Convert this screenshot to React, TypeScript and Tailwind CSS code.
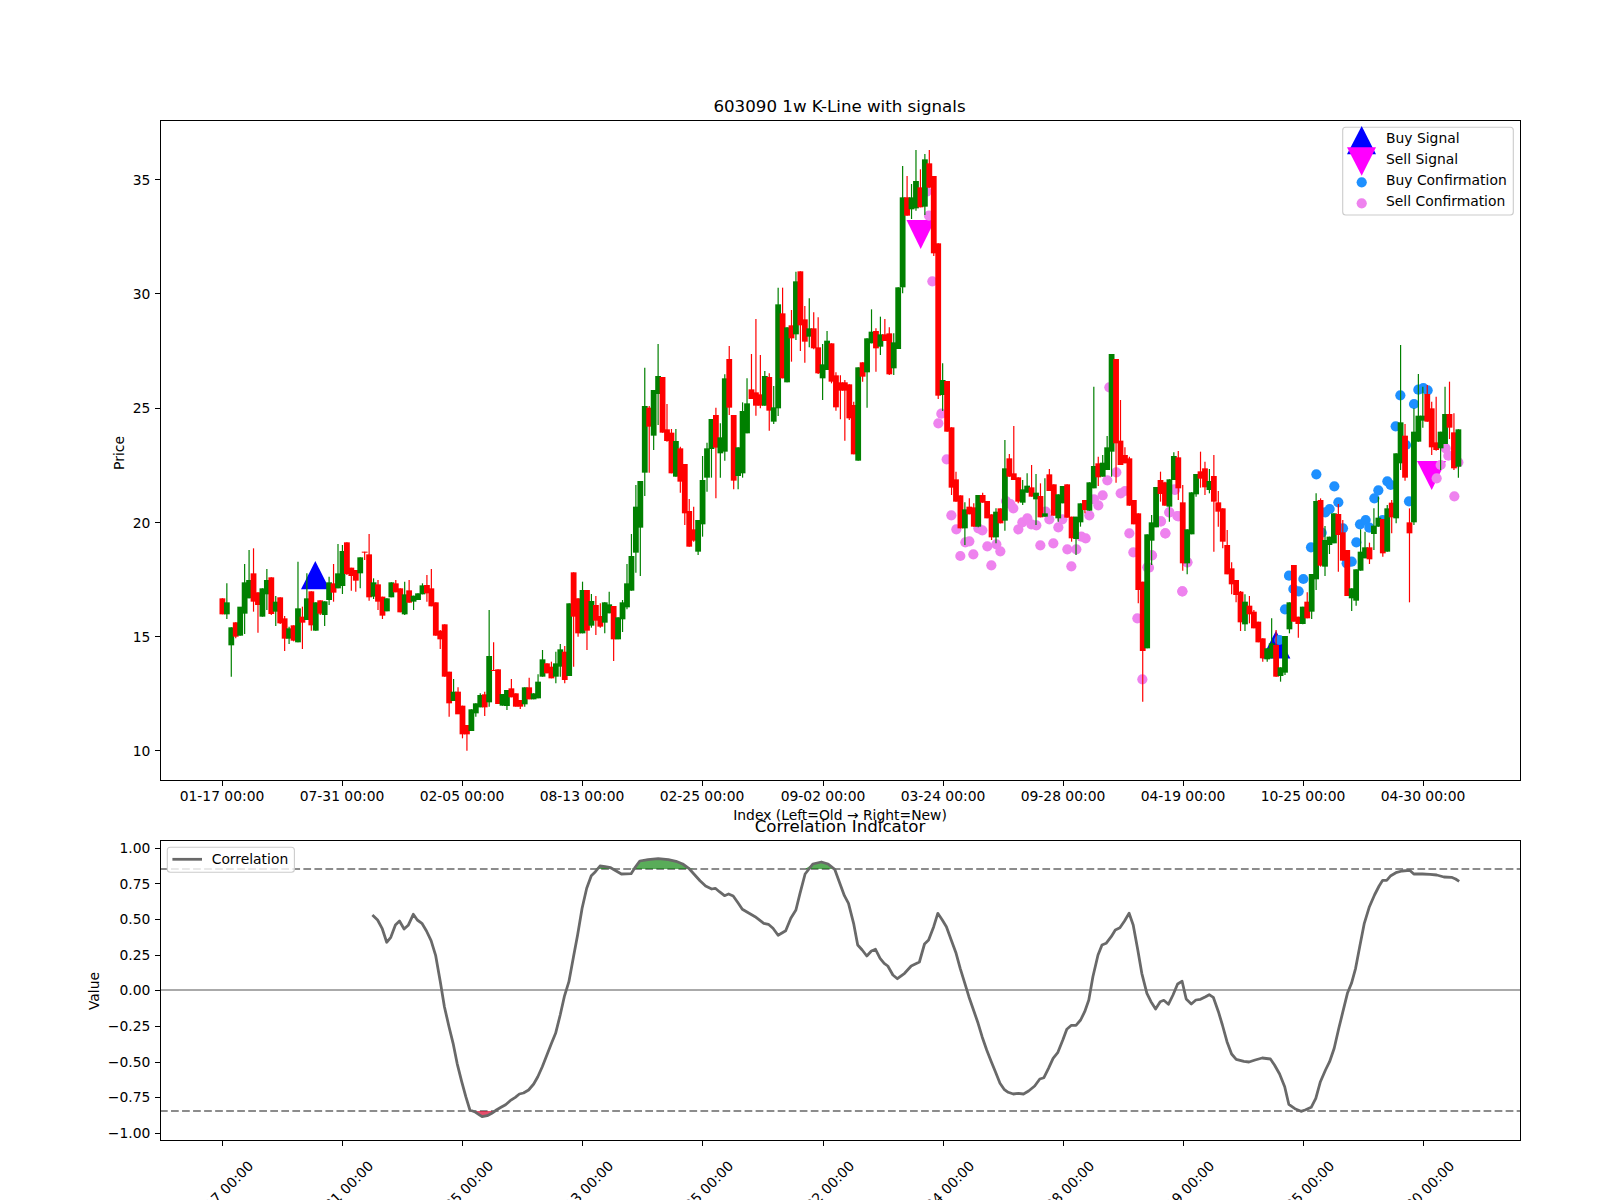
import React from "react";

type Row = [string, number, number, number, number];
type Candle = { c: string; wt: number; bt: number; bb: number; wb: number };

const seg = (y0: number, rows: Row[]): Candle[] =>
  rows.map(([c, wt, bt, bb, wb]) => ({
    c,
    wt: y0 + wt / 3,
    bt: y0 + bt / 3,
    bb: y0 + bb / 3,
    wb: y0 + wb / 3,
  }));

const candles: Candle[] = [
  ...seg(500, [
    ["r", 295, 295, 343, 343], ["g", 250, 307, 343, 357], ["g", 382, 382, 436, 530], ["r", 367, 367, 410, 415],
    ["g", 360, 320, 407, 407], ["g", 192, 247, 341, 402], ["g", 150, 240, 295, 295], ["r", 145, 220, 305, 335],
    ["r", 277, 277, 315, 398], ["g", 265, 265, 350, 350], ["g", 207, 240, 283, 330], ["r", 232, 232, 342, 345],
    ["g", 288, 305, 335, 378], ["r", 292, 292, 370, 372], ["r", 348, 355, 416, 453], ["g", 380, 385, 416, 432],
    ["r", 376, 376, 422, 424], ["g", 185, 325, 427, 427], ["r", 320, 350, 368, 447], ["g", 220, 295, 360, 360],
    ["r", 274, 274, 376, 392], ["g", 307, 307, 392, 392], ["r", 301, 301, 341, 345], ["g", 304, 304, 345, 378],
    ["g", 230, 247, 300, 315], ["r", 192, 250, 278, 305], ["g", 132, 220, 265, 265], ["g", 135, 153, 258, 282],
    ["r", 127, 127, 222, 225], ["r", 203, 203, 228, 272], ["r", 210, 210, 242, 275], ["g", 172, 172, 220, 265],
    ["r", 155, 155, 155, 180], ["r", 102, 163, 292, 302], ["g", 235, 247, 290, 297], ["r", 240, 253, 305, 330],
    ["r", 290, 290, 347, 357], ["g", 295, 295, 334, 334], ["g", 247, 247, 292, 292], ["r", 240, 250, 277, 277],
    ["r", 265, 265, 337, 337], ["g", 245, 283, 343, 345], ["r", 240, 271, 308, 308], ["g", 287, 287, 305, 330],
    ["g", 280, 280, 300, 300], ["g", 250, 256, 283, 283], ["r", 225, 255, 280, 305], ["r", 207, 265, 319, 319],
    ["r", 307, 307, 407, 407], ["r", 390, 392, 418, 447], ["r", 373, 373, 530, 530], ["r", 515, 515, 610, 650],
    ["g", 537, 575, 603, 603], ["r", 562, 575, 643, 640], ["r", 617, 617, 703, 715], ["r", 675, 675, 703, 752],
    ["g", 628, 628, 693, 693], ["g", 610, 610, 640, 650], ["g", 580, 585, 622, 622], ["r", 575, 583, 622, 648],
    ["g", 330, 468, 607, 620], ["r", 427, 510, 510, 510], ["r", 508, 508, 612, 612], ["g", 582, 582, 617, 617],
    ["g", 570, 570, 618, 630], ["r", 537, 565, 592, 592], ["r", 580, 580, 620, 620], ["r", 600, 600, 620, 627],
    ["g", 562, 562, 613, 620], ["r", 533, 562, 598, 598], ["g", 580, 580, 598, 598], ["g", 523, 545, 595, 595],
  ]),
  ...seg(470, [
    ["g", 540, 568, 620, 620], ["r", 580, 580, 610, 610], ["r", 575, 590, 625, 625], ["g", 545, 580, 620, 640],
    ["g", 522, 538, 590, 620], ["r", 528, 545, 630, 640], ["g", 400, 400, 618, 618], ["r", 307, 307, 440, 590],
    ["r", 385, 385, 490, 500], ["g", 335, 360, 490, 490], ["r", 360, 360, 482, 540], ["g", 372, 393, 467, 473],
    ["r", 378, 405, 452, 495], ["r", 400, 438, 470, 473], ["g", 397, 397, 458, 490], ["g", 365, 403, 430, 430],
    ["r", 408, 408, 508, 573], ["g", 442, 442, 508, 508], ["g", 390, 397, 448, 486], ["g", 282, 340, 412, 418],
    ["g", 192, 258, 362, 362], ["g", 45, 110, 248, 308], ["g", 33, 33, 173, 318],
  ]),
  ...seg(250, [
    ["g", 353, 468, 668, 738], ["r", 468, 473, 530, 668], ["g", 420, 420, 557, 600], ["g", 282, 378, 432, 525],
    ["r", 381, 381, 548, 548], ["r", 462, 538, 573, 575], ["r", 537, 548, 670, 670], ["g", 537, 573, 680, 680],
    ["r", 590, 595, 695, 728], ["r", 642, 642, 790, 825], ["r", 747, 783, 890, 890], ["r", 770, 838, 872, 875],
    ["g", 810, 810, 905, 915], ["g", 618, 690, 823, 860], ["g", 578, 595, 683, 725], ["g", 507, 507, 597, 683],
    ["r", 473, 495, 593, 745], ["g", 520, 562, 610, 683], ["g", 373, 385, 605, 632], ["r", 288, 327, 473, 495],
    ["r", 495, 495, 692, 718], ["g", 592, 592, 678, 718], ["g", 457, 483, 670, 683], ["g", 385, 460, 550, 550],
    ["r", 312, 418, 447, 447], ["r", 207, 427, 467, 497], ["r", 315, 433, 467, 475], ["g", 363, 378, 467, 467],
    ["r", 370, 381, 482, 542], ["g", 408, 472, 515, 522], ["g", 113, 163, 475, 498], ["r", 113, 190, 385, 385],
    ["g", 232, 232, 397, 397], ["r", 180, 226, 265, 335], ["g", 65, 94, 253, 270], ["r", 64, 64, 226, 303],
    ["r", 168, 208, 275, 338], ["g", 145, 235, 260, 292], ["r", 187, 235, 295, 298], ["r", 202, 292, 370, 372],
    ["g", 282, 343, 385, 450], ["g", 243, 272, 360, 360], ["r", 280, 280, 395, 400], ["r", 367, 376, 472, 482],
    ["r", 376, 397, 422, 508], ["r", 390, 397, 422, 572], ["r", 403, 403, 505, 510], ["r", 455, 465, 613, 613],
    ["g", 352, 352, 632, 632], ["r", 337, 337, 380, 395], ["g", 265, 265, 367, 473], ["g", 178, 245, 280, 280],
    ["r", 235, 243, 295, 365], ["g", 200, 253, 290, 315], ["r", 207, 253, 273, 273], ["r", 232, 250, 373, 375],
    ["g", 250, 277, 355, 375], ["g", 112, 112, 297, 297],
  ]),
  ...seg(120, [
    ["g", 138, 232, 502, 520], ["r", 168, 232, 287, 287], ["g", 192, 232, 268, 297], ["g", 90, 183, 265, 272],
    ["r", 148, 202, 262, 262], ["g", 102, 118, 260, 285], ["r", 90, 130, 203, 203], ["r", 168, 168, 400, 408],
    ["r", 370, 370, 827, 837], ["g", 730, 780, 825, 873],
  ]),
  ...seg(420, [
    ["r", -117, -117, 35, 35], ["r", 22, 22, 203, 225], ["r", 155, 178, 245, 245], ["r", 226, 226, 325, 325],
    ["g", 247, 268, 325, 375], ["r", 235, 260, 283, 283], ["r", 250, 262, 320, 320], ["g", 225, 225, 320, 322],
    ["r", 218, 225, 248, 248], ["r", 243, 243, 295, 295], ["r", 283, 283, 352, 360], ["g", 265, 275, 352, 370],
    ["r", 265, 265, 310, 310], ["g", 60, 145, 302, 332], ["r", 102, 115, 170, 170], ["r", 18, 160, 180, 180],
    ["r", 172, 172, 245, 250], ["g", 180, 208, 248, 255], ["g", 160, 197, 218, 218], ["r", 135, 202, 230, 230],
    ["g", 162, 218, 238, 315], ["r", 190, 228, 292, 292], ["g", 175, 280, 290, 290], ["r", 147, 163, 213, 213],
    ["r", 193, 193, 287, 287], ["g", 223, 223, 295, 305], ["g", 198, 198, 250, 250], ["r", 193, 193, 293, 293],
    ["r", 290, 290, 355, 365], ["g", 290, 290, 357, 405], ["g", 250, 250, 307, 320], ["r", 240, 240, 270, 280],
    ["g", 187, 187, 272, 272], ["g", -100, 138, 205, 205], ["r", 110, 130, 172, 198], ["g", 105, 128, 170, 170],
    ["g", 48, 82, 150, 150], ["g", -198, -198, 95, 170], ["r", -183, -183, 70, 188], ["r", -60, 62, 135, 135],
    ["r", 82, 105, 130, 130], ["r", 110, 115, 257, 257], ["r", 240, 240, 313, 313], ["r", 280, 280, 510, 550],
    ["r", 485, 485, 693, 845], ["g", 343, 343, 685, 685],
  ]),
  ...seg(350, [
    ["g", 495, 517, 572, 645], ["g", 411, 411, 532, 532], ["r", 365, 390, 432, 455], ["r", 395, 397, 467, 467],
    ["g", 388, 388, 470, 515], ["g", 307, 318, 390, 390], ["r", 303, 322, 415, 450], ["r", 405, 457, 640, 662],
    ["g", 538, 538, 640, 673], ["g", 427, 427, 553, 553], ["g", 372, 372, 433, 440], ["r", 305, 364, 386, 413],
    ["r", 335, 355, 412, 435], ["g", 357, 393, 420, 430], ["r", 315, 378, 455, 605], ["r", 423, 457, 485, 530],
    ["r", 475, 475, 575, 595], ["r", 540, 585, 673, 673], ["r", 637, 655, 703, 733], ["r", 690, 690, 735, 757],
    ["r", 723, 725, 817, 843], ["g", 733, 755, 823, 843], ["r", 738, 767, 793, 820], ["r", 780, 785, 835, 835],
    ["r", 815, 815, 877, 877], ["r", 865, 865, 925, 935], ["g", 895, 895, 928, 935], ["g", 805, 880, 925, 925],
    ["r", 840, 885, 980, 980], ["g", 952, 952, 978, 995], ["g", 858, 858, 968, 975], ["g", 757, 757, 838, 850],
    ["r", 645, 645, 815, 815], ["r", 800, 800, 822, 863], ["g", 770, 770, 822, 823], ["r", 727, 755, 805, 805],
    ["g", 672, 672, 785, 807], ["g", 430, 453, 688, 720], ["r", 445, 450, 647, 650], ["g", 528, 570, 650, 678],
    ["g", 560, 560, 585, 612], ["g", 490, 490, 580, 580], ["r", 462, 492, 555, 665], ["r", 510, 547, 632, 632],
    ["r", 600, 600, 738, 738], ["g", 715, 715, 745, 783], ["g", 658, 658, 752, 767], ["g", 538, 605, 662, 662],
    ["g", 545, 592, 625, 625], ["r", 578, 592, 628, 642], ["g", 475, 527, 552, 600], ["g", 440, 503, 530, 530],
    ["r", 507, 507, 610, 620], ["g", 465, 475, 605, 605], ["r", 450, 458, 502, 550], ["g", 310, 310, 505, 520],
    ["g", -15, 217, 340, 360], ["r", 222, 257, 383, 392], ["r", 475, 517, 550, 757], ["g", 175, 245, 517, 525],
    ["g", 72, 197, 275, 275], ["g", 110, 197, 212, 233], ["r", 105, 132, 215, 215], ["r", 155, 175, 292, 315],
    ["r", 140, 277, 300, 302], ["g", 245, 245, 295, 360], ["g", 110, 192, 282, 282], ["r", 95, 192, 233, 267],
    ["r", 190, 247, 355, 360], ["g", 238, 238, 350, 383],
  ]),
];

const cx = (i: number) => 222.4 + 4.446 * i;

const zoomPts = (x0: number, y0: number, pts: number[][]) => pts.map(([x, y]) => [x0 + x / 3, y0 + y / 3]);

const buyPts = zoomPts(1150, 350, [
  [499, 373], [553, 409], [565, 457], [526, 487], [539, 477], [515, 548], [579, 535], [630, 523], [647, 510],
  [658, 533], [673, 445], [685, 421], [712, 394], [722, 405], [737, 229], [751, 136], [768, 285], [792, 162],
  [805, 119], [820, 114], [833, 121], [777, 454], [619, 577], [605, 635], [590, 640], [483, 592], [460, 687],
  [446, 724], [430, 717], [417, 677], [405, 778], [388, 870], [698, 510],
]);

const sellPts = [
  ...zoomPts(1150, 350, [
    [58, 487], [32, 514], [82, 498], [46, 550], [5, 616], [-3, 653], [112, 637], [97, 724], [75, 420], [887, 295],
    [895, 317], [872, 345], [860, 385], [913, 439], [925, 337],
  ]),
  ...zoomPts(880, 420, [
    [175, 10], [200, 118], [214, 286], [229, 328], [256, 367], [268, 364], [241, 408], [280, 403], [295, 325],
    [307, 331], [322, 379], [349, 373], [361, 394], [334, 436], [378, 243], [391, 252], [400, 265], [415, 328],
    [427, 307], [442, 295], [454, 313], [469, 316], [481, 376], [497, 275], [508, 298], [520, 370], [535, 322],
    [547, 298], [562, 388], [589, 388], [574, 439], [604, 350], [617, 355], [628, 286], [642, 238], [655, 256],
    [668, 226], [682, 181], [709, 157], [722, 220], [735, 213], [748, 340], [760, 397], [772, 595], [787, 778],
    [802, 442], [816, 406], [843, 304], [856, 340], [868, 277], [883, 208], [895, 289], [922, 427], [907, 514],
  ]),
  ...zoomPts(880, 120, [[140, 215], [147, 287], [157, 484], [184, 881], [688, 802]]),
];

const corrA = [
  [730, 405], [740, 420], [749, 445], [758, 487], [766, 472], [775, 435], [783, 423], [792, 447], [800, 436], [810, 403],
  [818, 420], [827, 430], [836, 453], [845, 482], [854, 527], [863, 605], [871, 680], [880, 740], [888, 790], [896, 850],
  [905, 905], [913, 950], [921, 990], [930, 995], [938, 1003], [945, 1010], [955, 1007], [964, 1000], [973, 990], [982, 982],
  [991, 974], [1000, 962], [1010, 952], [1018, 942], [1026, 939], [1036, 930], [1046, 912], [1054, 890], [1063, 860], [1072, 825],
  [1081, 790], [1089, 760], [1098, 705], [1106, 650], [1115, 605], [1124, 530], [1132, 465], [1141, 385], [1150, 325], [1159, 287],
  [1167, 275], [1176, 258], [1186, 260], [1197, 263], [1207, 272], [1218, 282], [1237, 281], [1245, 262], [1254, 243], [1270, 239],
  [1290, 236], [1310, 239], [1325, 244], [1338, 252], [1350, 265], [1360, 282], [1372, 302], [1383, 318], [1395, 327], [1402, 325],
  [1410, 335], [1420, 347], [1428, 342], [1437, 348], [1447, 370], [1455, 388], [1465, 397], [1480, 410], [1497, 430], [1506, 433],
  [1515, 445], [1525, 466], [1540, 452], [1550, 415], [1560, 390],
];
const corrB = [
  [0, 340], [10, 282], [25, 252], [42, 246], [55, 252], [68, 268], [78, 310], [87, 347], [95, 370], [105, 430],
  [113, 495], [122, 510], [131, 528], [140, 513], [148, 508], [157, 535], [165, 550], [172, 558], [182, 585], [191, 596],
  [205, 580], [218, 558], [234, 546], [244, 492], [252, 480], [262, 440], [270, 400], [279, 420], [287, 440], [297, 482],
  [306, 520], [314, 565], [322, 605], [331, 650], [340, 690], [349, 730], [357, 770], [366, 810], [375, 845], [383, 875],
  [392, 910], [400, 928], [408, 937], [418, 942], [428, 940], [438, 942], [448, 933], [460, 918], [470, 897], [478, 893],
  [487, 865], [496, 835], [505, 818], [515, 780], [523, 748], [532, 736], [541, 736], [550, 720], [558, 695], [566, 660],
  [574, 590], [584, 525], [592, 495], [600, 490], [610, 470], [618, 450], [627, 443], [636, 423], [645, 400], [653, 435],
  [662, 510], [670, 580], [680, 640], [688, 665], [697, 687], [706, 665], [713, 661], [722, 673], [731, 645], [740, 612],
  [749, 604], [757, 657], [767, 672], [776, 660], [785, 658], [795, 650], [802, 644], [810, 652], [820, 695], [828, 735],
  [837, 785], [846, 822], [855, 838], [870, 844], [880, 846], [892, 840], [906, 834], [922, 837], [930, 855], [940, 882],
  [950, 920], [958, 973], [970, 986], [982, 994], [990, 990], [1002, 982], [1011, 955], [1020, 905], [1030, 870], [1038, 845],
  [1047, 805], [1056, 745], [1064, 695], [1073, 640], [1081, 610], [1089, 565], [1097, 500], [1106, 430], [1116, 380], [1126, 345],
  [1135, 318], [1142, 301], [1150, 301], [1158, 287], [1168, 278], [1180, 273], [1195, 271], [1203, 282], [1220, 282], [1235, 283],
  [1248, 285], [1262, 291], [1277, 292], [1285, 297], [1292, 304],
];
const corr = [
  ...corrA.map(([x, y]) => [x / 1.96, 780 + y / 3]),
  ...corrB.map(([x, y]) => [800 + x / 1.96, 780 + y / 3]),
];
const toPoints = (p: number[][]) => p.map(([x, y]) => `${x.toFixed(1)},${y.toFixed(1)}`).join(" ");

const upperY = 869;
const lowerY = 1111;
const upperFill = toPoints([[corr[0][0], upperY], ...corr.map(([x, y]) => [x, Math.min(y, upperY)]), [corr[corr.length - 1][0], upperY]]);
const lowerFill = toPoints([[corr[0][0], lowerY], ...corr.map(([x, y]) => [x, Math.max(y, lowerY)]), [corr[corr.length - 1][0], lowerY]]);

const dates = [
  "01-17 00:00", "07-31 00:00", "02-05 00:00", "08-13 00:00", "02-25 00:00", "09-02 00:00",
  "03-24 00:00", "09-28 00:00", "04-19 00:00", "10-25 00:00", "04-30 00:00",
];
const tickX = (k: number) => Math.floor(222.5 + 120.1 * k) + 0.5;
const priceTicks = [35, 30, 25, 20, 15, 10];
const priceY = (p: number) => 750.9 - (p - 10) * 22.86;
const corrTicks = ["1.00", "0.75", "0.50", "0.25", "0.00", "−0.25", "−0.50", "−0.75", "−1.00"];
const snap = (v: number) => Math.floor(v) + 0.5;

export default function App() {
  return (
    <div className="w-[1600px] h-[1200px] overflow-hidden bg-white text-black font-['DejaVu_Sans',sans-serif]">
      <svg className="block" width={1600} height={1200} viewBox="0 0 1600 1200" fontSize={13.89} fill="#000">
        <defs>
          <clipPath id="top-axes">
            <rect x={160} y={120} width={1360} height={660} />
          </clipPath>
        </defs>

        {/* Top axes content */}
        <g clipPath="url(#top-axes)">
          <polygon points="315.3,561 301,589.3 329.6,589.3" fill="#0000ff" />
          <polygon points="1276,630.7 1261.7,658.4 1290.4,658.4" fill="#0000ff" />
          <polygon points="906.5,220 935,220 920.7,249" fill="#ff00ff" />
          <polygon points="1417,461 1446,461 1431.7,490" fill="#ff00ff" />
          {buyPts.map(([x, y], i) => (
            <circle key={`b${i}`} cx={x} cy={y} r={5.1} fill="#1e90ff" />
          ))}
          {sellPts.map(([x, y], i) => (
            <circle key={`s${i}`} cx={x} cy={y} r={5.1} fill="#ee82ee" />
          ))}
          {candles.map((k, i) => {
            const color = k.c === "r" ? "#ff0000" : "#008000";
            const x = cx(i);
            return (
              <g key={i}>
                <line x1={x} x2={x} y1={k.wt} y2={k.wb} stroke={color} strokeWidth={1.2} />
                <rect x={x - 2.9} y={k.bt} width={5.8} height={Math.max(k.bb - k.bt, 1)} fill={color} />
              </g>
            );
          })}
        </g>

        <rect x={160.5} y={120.5} width={1360} height={660} fill="none" stroke="#000" strokeWidth={1} shapeRendering="crispEdges" />

        {priceTicks.map((p) => (
          <g key={p}>
            <line x1={155} x2={160} y1={snap(priceY(p))} y2={snap(priceY(p))} stroke="#000" strokeWidth={1} shapeRendering="crispEdges" />
            <text x={150.4} y={priceY(p) + 5.2} textAnchor="end">{p}</text>
          </g>
        ))}
        {dates.map((d, k) => (
          <g key={d}>
            <line x1={tickX(k)} x2={tickX(k)} y1={781} y2={786} stroke="#000" strokeWidth={1} shapeRendering="crispEdges" />
            <text x={tickX(k) - 0.5} y={801} textAnchor="middle">{d}</text>
          </g>
        ))}
        <text x={839.5} y={111.7} textAnchor="middle" fontSize={16.67}>603090 1w K-Line with signals</text>
        <text x={840} y={820} textAnchor="middle">Index (Left=Old → Right=New)</text>
        <text transform="translate(124 453) rotate(-90)" textAnchor="middle">Price</text>

        {/* Legend of the top axes */}
        <rect x={1342.7} y={127.3} width={170.6} height={87.7} rx={3} fill="#ffffff" fillOpacity={0.8} stroke="#cccccc" strokeWidth={1.1} />
        <polygon points="1361.7,126 1347,154.3 1376,154.3" fill="#0000ff" />
        <polygon points="1347,147.3 1376,147.3 1361.7,175.7" fill="#ff00ff" />
        <circle cx={1361.7} cy={182.3} r={5.1} fill="#1e90ff" />
        <circle cx={1361.7} cy={203.3} r={5.1} fill="#ee82ee" />
        <text x={1386} y={143.3}>Buy Signal</text>
        <text x={1386} y={164.3}>Sell Signal</text>
        <text x={1386} y={185.3}>Buy Confirmation</text>
        <text x={1386} y={206.3}>Sell Confirmation</text>

        {/* Bottom axes */}
        <line x1={160} x2={1520} y1={upperY} y2={upperY} stroke="#8c8c8c" strokeWidth={2.08} strokeDasharray="7.7 3.33" />
        <line x1={160} x2={1520} y1={lowerY} y2={lowerY} stroke="#8c8c8c" strokeWidth={2.08} strokeDasharray="7.7 3.33" />
        <line x1={160} x2={1520} y1={990} y2={990} stroke="#aaaaaa" strokeWidth={2.08} />
        <polygon points={upperFill} fill="#008000" fillOpacity={0.65} />
        <polygon points={lowerFill} fill="#dc143c" fillOpacity={0.75} />
        <polyline points={toPoints(corr)} fill="none" stroke="#696969" strokeWidth={2.78} strokeLinejoin="round" />
        <rect x={160.5} y={840.5} width={1360} height={300} fill="none" stroke="#000" strokeWidth={1} shapeRendering="crispEdges" />

        {corrTicks.map((t, i) => {
          const y = 848.3 + i * 35.63;
          return (
            <g key={t}>
              <line x1={155} x2={160} y1={snap(y)} y2={snap(y)} stroke="#000" strokeWidth={1} shapeRendering="crispEdges" />
              <text x={150.4} y={y + 4.6} textAnchor="end">{t}</text>
            </g>
          );
        })}
        {dates.map((d, k) => (
          <g key={`r${d}`}>
            <line x1={tickX(k)} x2={tickX(k)} y1={1141} y2={1146} stroke="#000" strokeWidth={1} shapeRendering="crispEdges" />
            <text transform={`translate(${tickX(k) - 1} 1194) rotate(-45)`} textAnchor="middle" dominantBaseline="middle">{d}</text>
          </g>
        ))}
        <text x={840} y={832} textAnchor="middle" fontSize={16.67}>Correlation Indicator</text>
        <text transform="translate(99 991) rotate(-90)" textAnchor="middle">Value</text>

        {/* Legend of the bottom axes */}
        <rect x={167.3} y={847.3} width={127.1} height={25} rx={3} fill="#ffffff" fillOpacity={0.8} stroke="#cccccc" strokeWidth={1.1} />
        <line x1={172.4} x2={202} y1={859.3} y2={859.3} stroke="#696969" strokeWidth={2.78} />
        <text x={211.7} y={864}>Correlation</text>
      </svg>
    </div>
  );
}
